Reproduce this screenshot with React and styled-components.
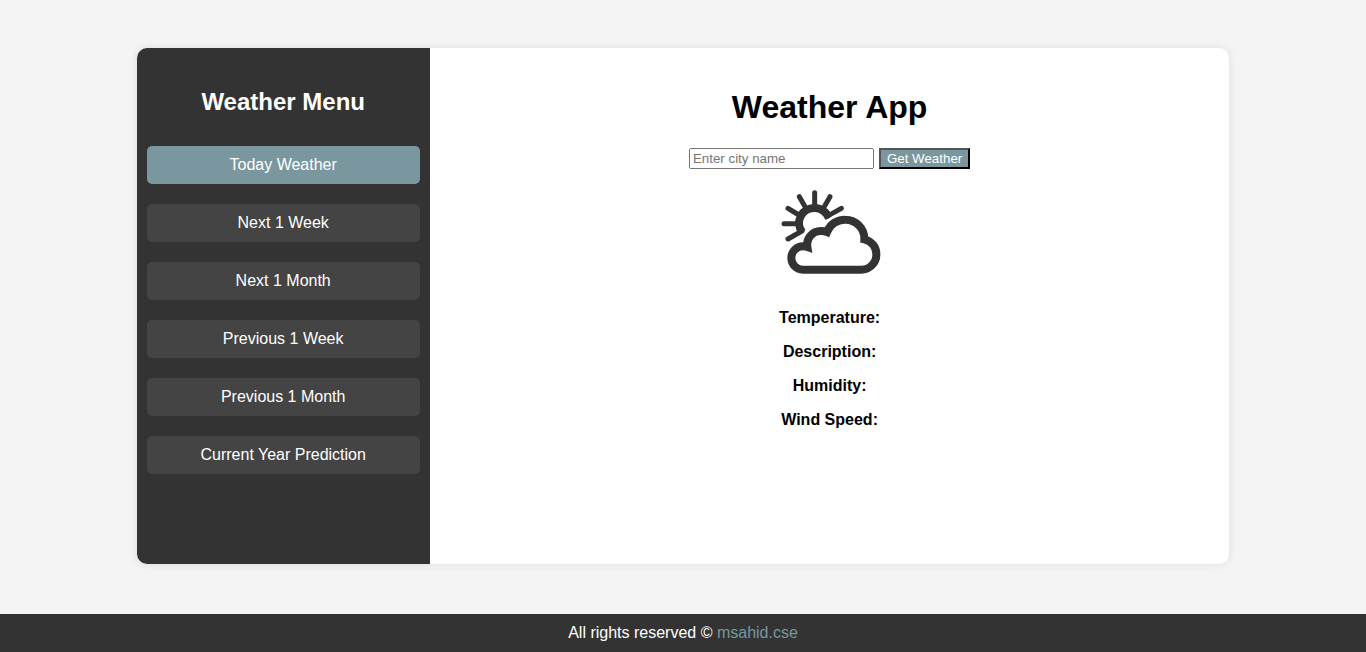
import React, { useState } from "react";
import styled, { createGlobalStyle } from "styled-components";

const GlobalStyle = createGlobalStyle`
  * {
    box-sizing: border-box;
  }
  body {
    margin: 0;
    background: #f4f4f4;
    color: #000;
    font-family: Arial, "Liberation Sans", sans-serif;
    font-size: 16px;
    line-height: 18px;
  }
`;

const Page = styled.div`
  display: flex;
  flex-direction: column;
  min-height: 100vh;
`;

const Content = styled.main`
  flex: 1;
  display: flex;
  justify-content: center;
  padding: 48px 0 50px;
`;

const Card = styled.div`
  display: flex;
  width: 80%;
  background: #fff;
  border-radius: 10px;
  box-shadow: 0 0 10px rgba(0, 0, 0, 0.1);
  overflow: hidden;
`;

const Sidebar = styled.nav`
  flex: none;
  width: calc(25% + 20px);
  padding: 40px 10px 20px;
  background: #333;
  color: #fff;
  text-align: center;
`;

const MenuTitle = styled.h2`
  margin: 0 0 30px;
  font-size: 24px;
  line-height: 28px;
`;

const Menu = styled.ul`
  display: grid;
  gap: 20px;
  margin: 0;
  padding: 0;
  list-style: none;
`;

const MenuLink = styled.a`
  display: block;
  padding: 10px;
  border-radius: 5px;
  background: ${({ $active }) => ($active ? "#7a979f" : "#444")};
  color: #fff;
  text-decoration: none;
`;

const Weather = styled.section`
  flex: 1;
  display: flex;
  flex-direction: column;
  align-items: center;
  padding: 40px 20px 20px;
`;

const Title = styled.h1`
  margin: 0 0 22px;
  font-size: 32px;
  line-height: 38px;
`;

const Search = styled.form`
  display: flex;
  gap: 5px;
  margin-bottom: 11px;
`;

const CityInput = styled.input`
  width: 185px;
  height: 21px;
`;

const SearchButton = styled.button`
  height: 21px;
  padding: 1px 6px;
  border: 2px outset #000;
  background: #7a979f;
  color: #fff;
  line-height: 15px;
`;

const Icon = styled.svg`
  display: block;
  width: 100px;
  height: 100px;
  margin-bottom: 29px;
  overflow: visible;
`;

const Details = styled.div`
  display: grid;
  gap: 16px;
  text-align: center;
  font-weight: bold;
`;

const Footer = styled.footer`
  padding: 10px;
  background: #333;
  color: #fff;
  text-align: center;
`;

const FooterLink = styled.a`
  color: #7a979f;
  text-decoration: none;
`;

const periods = [
  "Today Weather",
  "Next 1 Week",
  "Next 1 Month",
  "Previous 1 Week",
  "Previous 1 Month",
  "Current Year Prediction",
];

const readings = ["Temperature", "Description", "Humidity", "Wind Speed"];

const cloud =
  "M99 269A35 35 0 0 1 64 234A35 35 0 0 1 99 199Q106 199 112 201A41 41 0 0 1 153 153Q164 153 171 156A57 57 0 0 1 226 119A57 57 0 0 1 283 178A45 45 0 0 1 319 224A45 45 0 0 1 274 269Z";

function PartlyCloudy() {
  return (
    <Icon viewBox="30 0 300 300" fill="none" role="img" aria-label="Partly cloudy">
      <path d="M97 157A45 45 0 0 1 134 84A45 45 0 0 1 177 116" stroke="#333" strokeWidth="24" />
      <path
        d="M134 38V78M88 50L104 78M180 50L164 78M54 85L82 102M214 85L186 101M42 131H80M54 177L96 153"
        stroke="#333"
        strokeWidth="15"
        strokeLinecap="round"
      />
      <path d={cloud} stroke="#fff" strokeWidth="40" />
      <path d={cloud} stroke="#333" strokeWidth="24" />
    </Icon>
  );
}

export default function App() {
  const [active, setActive] = useState(periods[0]);
  const [city, setCity] = useState("");

  return (
    <>
      <GlobalStyle />
      <Page>
        <Content>
          <Card>
            <Sidebar>
              <MenuTitle>Weather Menu</MenuTitle>
              <Menu>
                {periods.map((period) => (
                  <li key={period}>
                    <MenuLink
                      href="#"
                      $active={period === active}
                      onClick={() => setActive(period)}
                    >
                      {period}
                    </MenuLink>
                  </li>
                ))}
              </Menu>
            </Sidebar>
            <Weather>
              <Title>Weather App</Title>
              <Search onSubmit={(event) => event.preventDefault()}>
                <CityInput
                  type="text"
                  aria-label="City name"
                  placeholder="Enter city name"
                  value={city}
                  onChange={(event) => setCity(event.target.value)}
                />
                <SearchButton type="submit">Get Weather</SearchButton>
              </Search>
              <PartlyCloudy />
              <Details>
                {readings.map((reading) => (
                  <div key={reading}>{reading}:</div>
                ))}
              </Details>
            </Weather>
          </Card>
        </Content>
        <Footer>
          All rights reserved © <FooterLink href="#">msahid.cse</FooterLink>
        </Footer>
      </Page>
    </>
  );
}
